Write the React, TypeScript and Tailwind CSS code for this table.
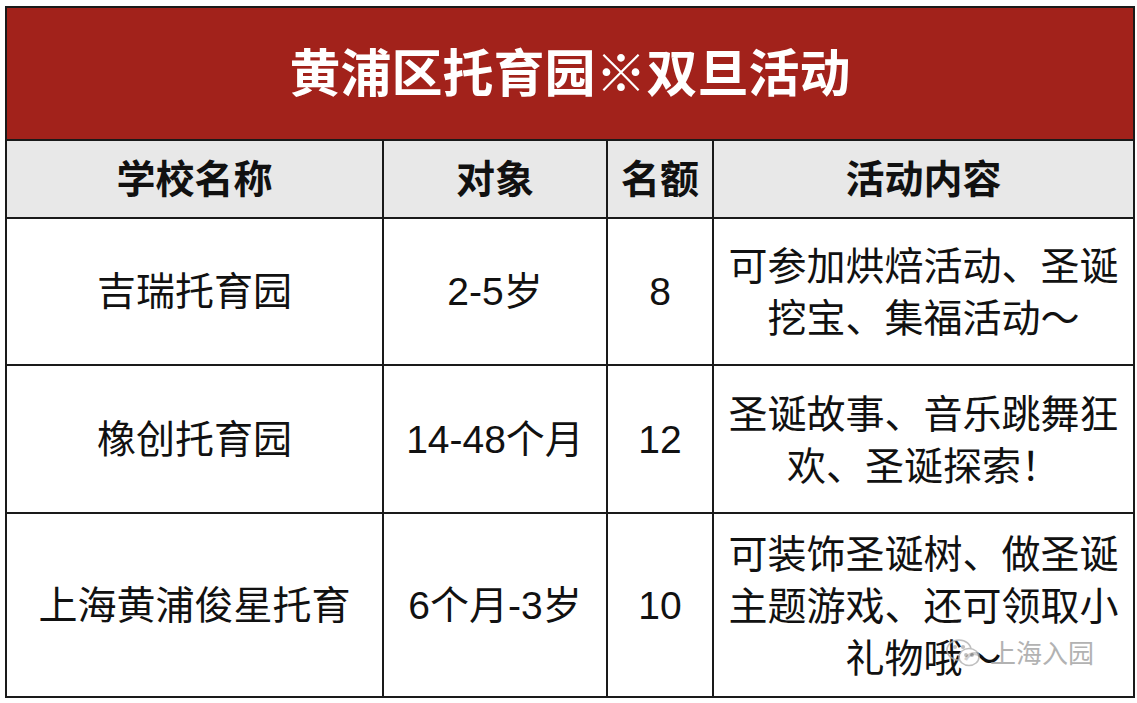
import React from "react";

const rows = [
  { name: "吉瑞托育园", target: "2-5岁", quota: "8", content: ["可参加烘焙活动、圣诞", "挖宝、集福活动～"], h: "h-[145px]" },
  { name: "橡创托育园", target: "14-48个月", quota: "12", content: ["圣诞故事、音乐跳舞狂", "欢、圣诞探索！"], h: "h-[146px]" },
  { name: "上海黄浦俊星托育", target: "6个月-3岁", quota: "10", content: ["可装饰圣诞树、做圣诞", "主题游戏、还可领取小", "礼物哦～"], h: "h-[182px]" },
];

function WechatMark() {
  return (
    <div className="absolute left-[944px] top-[637px] flex items-center gap-[6px] text-[#a0a0a0] opacity-80">
      <svg width="40" height="34" viewBox="0 0 40 34" fill="none" stroke="#b0b0b0" strokeWidth="1.6">
        <ellipse cx="15" cy="13" rx="12" ry="10" />
        <ellipse cx="25" cy="20" rx="10" ry="8.5" fill="white" />
        <circle cx="11" cy="10" r="1.3" fill="#b0b0b0" />
        <circle cx="19" cy="10" r="1.3" fill="#b0b0b0" />
        <circle cx="22" cy="18" r="1.1" fill="#b0b0b0" />
        <circle cx="28" cy="18" r="1.1" fill="#b0b0b0" />
      </svg>
      <span className="text-[26px] leading-none">上海入园</span>
    </div>
  );
}

export default function App() {
  return (
    <div
      className="relative w-[1137px] h-[703px] bg-white pl-[5px] pt-[6px]"
      style={{ fontFamily: '"Liberation Sans", "Noto Sans CJK SC", sans-serif' }}
    >
      <div className="grid w-[1130px] grid-cols-[375px_222px_104px_419px] gap-[2px] bg-[#1a1a1a] p-[2px]">
        <div className="col-span-4 flex h-[131px] items-center justify-center bg-[#a2221b] pt-[2px] text-[51px] font-bold leading-none text-white">
          黄浦区托育园※双旦活动
        </div>

        {["学校名称", "对象", "名额", "活动内容"].map((t) => (
          <div key={t} className="flex h-[76px] items-center justify-center bg-[#e8e8e8] text-[39px] font-bold leading-none text-[#111]">
            {t}
          </div>
        ))}

        {rows.map((r) => (
          <React.Fragment key={r.name}>
            <div className={`flex ${r.h} items-center justify-center bg-white text-[39px] leading-none text-[#111]`}>{r.name}</div>
            <div className={`flex ${r.h} items-center justify-center bg-white text-[39px] leading-none text-[#111]`}>{r.target}</div>
            <div className={`flex ${r.h} items-center justify-center bg-white text-[39px] leading-none text-[#111]`}>{r.quota}</div>
            <div className={`flex ${r.h} flex-col items-center justify-center bg-white pt-[3px] text-[39px] leading-[52px] text-[#111]`}>
              {r.content.map((l) => (
                <span key={l}>{l}</span>
              ))}
            </div>
          </React.Fragment>
        ))}
      </div>
      <WechatMark />
    </div>
  );
}
